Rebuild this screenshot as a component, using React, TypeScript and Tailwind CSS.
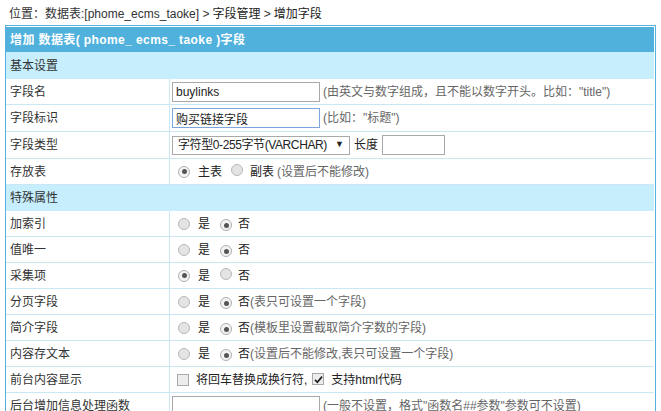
import React from "react";

function Radio({ checked }: { checked?: boolean }) {
  return (
    <span
      className={
        "inline-flex w-[12px] h-[12px] rounded-full border items-center justify-center shrink-0 " +
        (checked ? "border-[#b0b0b0] bg-[#f3f3f3]" : "border-[#b8b8b8] bg-[#e4e4e4]")
      }
    >
      {checked && <span className="w-[5px] h-[5px] rounded-full bg-[#555555]" />}
    </span>
  );
}

function Check({ checked }: { checked?: boolean }) {
  return (
    <span className="inline-flex w-[12px] h-[12px] border border-[#a9a9a9] bg-[#ededed] items-center justify-center shrink-0">
      {checked && (
        <svg width="9" height="9" viewBox="0 0 9 9">
          <path d="M1 4.8 L3.4 7.2 L8 1.6" stroke="#222" strokeWidth="1.7" fill="none" />
        </svg>
      )}
    </span>
  );
}

function Row({
  label,
  children,
  h = "h-[26px]",
}: {
  label: string;
  children: React.ReactNode;
  h?: string;
}) {
  return (
    <div className={"flex border-b border-[#c9e7f5] " + h}>
      <div className="w-[164px] shrink-0 border-r border-[#c9e7f5] pl-[4px] flex items-center text-[#333]">
        {label}
      </div>
      <div className="flex-1 flex items-center">{children}</div>
    </div>
  );
}

function YesNo({ yes, hint }: { yes: boolean; hint?: string }) {
  return (
    <div className="flex items-center pl-[8px]">
      <Radio checked={yes} />
      <span className="ml-[8px] text-[#222]">是</span>
      <span className="ml-[10px]">
        <Radio checked={!yes} />
      </span>
      <span className="ml-[6px] text-[#222]">否</span>
      {hint && <span className="text-[#666]">{hint}</span>}
    </div>
  );
}

export default function App() {
  return (
    <div className="w-[661px] h-[411px] overflow-hidden bg-white text-[12px] font-['Liberation_Sans','Noto_Sans_CJK_SC',sans-serif]">
      <div className="h-[25px] pl-[9px] pt-[3px] flex items-center text-[#333]">
        位置：数据表:[phome_ecms_taoke] &gt; <span className="ml-[3px] text-[#222]">字段管理</span>&nbsp;&gt;{" "}
        <span className="ml-[3px] text-[#222]">增加字段</span>
      </div>
      <div className="ml-[5px] w-[651px] border border-[#56b3dd] pt-px pr-px">
        <div className="h-[25px] bg-[#4fb1dc] text-white font-bold pl-[4px] flex items-center tracking-[0.4px]">
          增加 数据表( phome_ ecms_ taoke )字段
        </div>
        <div className="h-[27px] bg-[#c7eefd] pl-[4px] flex items-center text-[#333]">基本设置</div>

        <Row label="字段名">
          <input
            readOnly
            value="buylinks"
            className="ml-[2px] w-[148px] h-[20px] border border-[#a9a9a9] px-[3px] text-[12px] text-[#222] outline-none"
          />
          <span className="ml-[3px] text-[#666]">(由英文与数字组成，且不能以数字开头。比如："title")</span>
        </Row>
        <Row label="字段标识" h="h-[27px]">
          <input
            readOnly
            value="购买链接字段"
            className="ml-[2px] w-[148px] h-[20px] border border-[#7ba7de] px-[3px] text-[12px] text-[#222] outline-none"
          />
          <span className="ml-[3px] text-[#666]">(比如："标题")</span>
        </Row>
        <Row label="字段类型" h="h-[27px]">
          <div className="ml-[2px] w-[178px] h-[19px] border border-[#a9a9a9] bg-white flex items-center pl-[5px] text-[#222]">
            <span className="flex-1 tracking-[-0.4px] whitespace-nowrap">字符型0-255字节(VARCHAR)</span>
            <span className="text-[9px] mr-[5px] text-[#222]">▼</span>
          </div>
          <span className="ml-[4px] text-[#222]">长度</span>
          <input
            readOnly
            value=""
            className="ml-[4px] w-[63px] h-[20px] border border-[#a9a9a9] outline-none"
          />
        </Row>
        <Row label="存放表">
          <div className="flex items-center pl-[8px]">
            <Radio checked />
            <span className="ml-[8px] text-[#222]">主表</span>
            <span className="ml-[9px]">
              <Radio />
            </span>
            <span className="ml-[7px] text-[#222]">副表</span>
            <span className="ml-[3px] text-[#666]">(设置后不能修改)</span>
          </div>
        </Row>
        <div className="h-[26px] bg-[#c7eefd] pl-[4px] flex items-center text-[#333]">特殊属性</div>
        <Row label="加索引">
          <YesNo yes={false} />
        </Row>
        <Row label="值唯一">
          <YesNo yes={false} />
        </Row>
        <Row label="采集项">
          <YesNo yes={true} />
        </Row>
        <Row label="分页字段">
          <YesNo yes={false} hint="(表只可设置一个字段)" />
        </Row>
        <Row label="简介字段">
          <YesNo yes={false} hint="(模板里设置截取简介字数的字段)" />
        </Row>
        <Row label="内容存文本">
          <YesNo yes={false} hint="(设置后不能修改,表只可设置一个字段)" />
        </Row>
        <Row label="前台内容显示">
          <div className="flex items-center pl-[7px]">
            <Check />
            <span className="ml-[7px] text-[#222]">将回车替换成换行符,</span>
            <span className="ml-[5px]">
              <Check checked />
            </span>
            <span className="ml-[7px] text-[#222]">支持html代码</span>
          </div>
        </Row>
        <Row label="后台增加信息处理函数">
          <input
            readOnly
            value=""
            className="ml-[2px] w-[148px] h-[20px] border border-[#a9a9a9] outline-none"
          />
          <span className="ml-[3px] text-[#666]">(一般不设置，格式"函数名##参数"参数可不设置)</span>
        </Row>
      </div>
    </div>
  );
}
